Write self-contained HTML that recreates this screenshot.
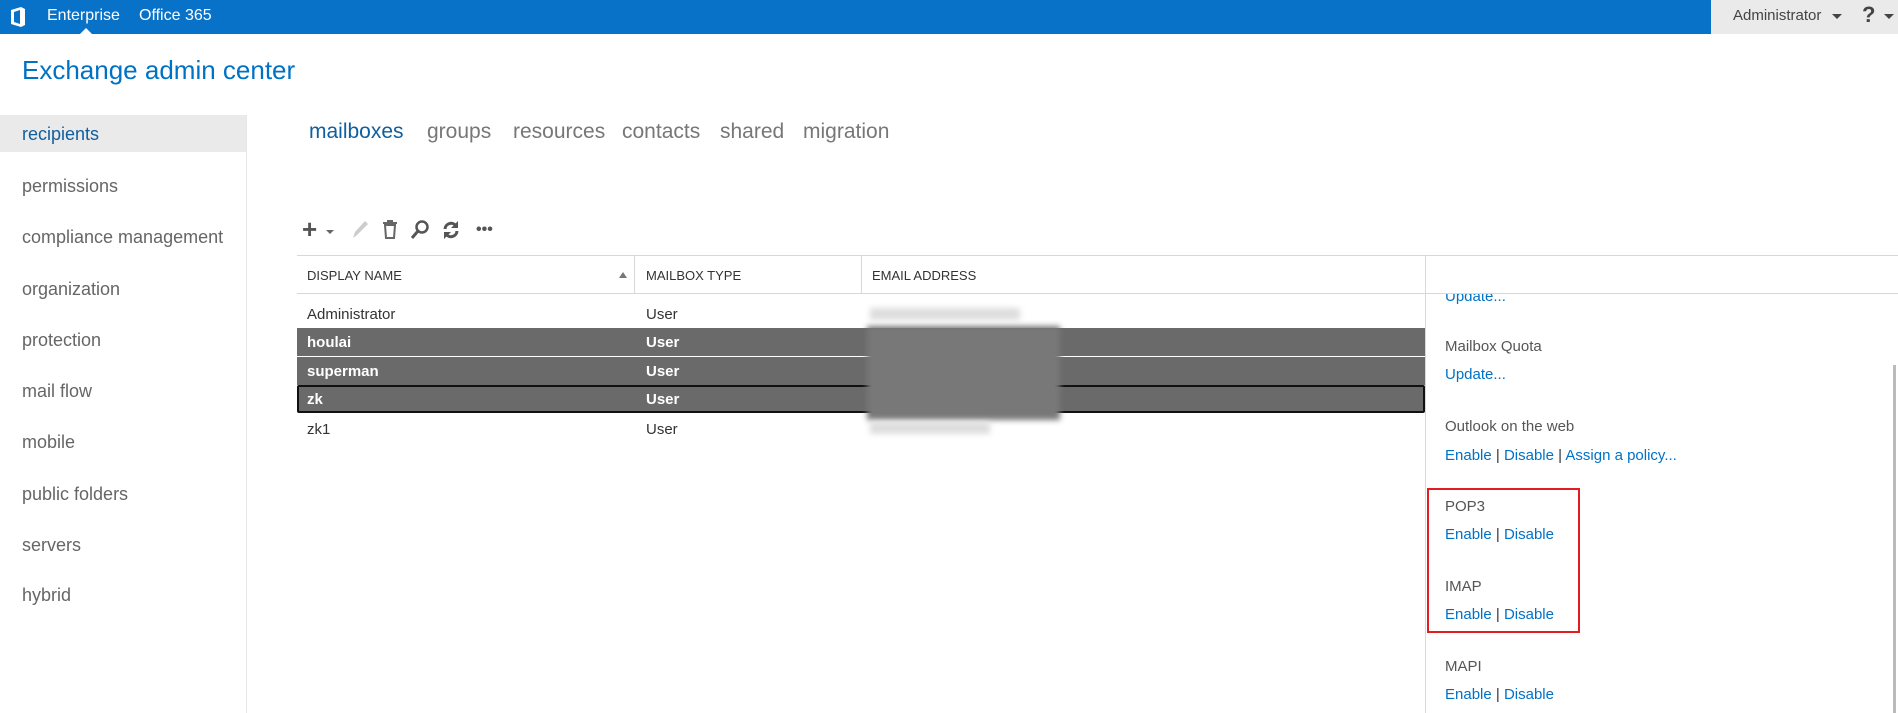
<!DOCTYPE html>
<html><head><meta charset="utf-8"><style>
*{margin:0;padding:0;box-sizing:border-box}
body{width:1898px;height:713px;overflow:hidden;background:#fff;font-family:"Liberation Sans",sans-serif;position:relative;color:#333}
.a{position:absolute;white-space:nowrap}
.top{left:0;top:0;width:1898px;height:34px;background:#0872c9}
.topr{left:1711px;top:0;width:187px;height:34px;background:#eaeaea}
.side{font-size:18px;color:#666;left:22px}
.tab{font-size:21px;color:#777;top:120px}
.hd{font-size:13px;color:#333;top:268px}
.row{font-size:15px;left:297px;width:1128px;height:28px}
.dk{background:#6a6a6a;color:#fff;font-weight:bold}
.c{position:absolute;top:6px}
.pl{font-size:15px;color:#555;left:1445px}
.lk{font-size:15px;color:#0072c6;left:1445px}
.lk span{color:#333}
</style></head><body>
<div class="a top"></div>
<div class="a topr"></div>
<svg class="a" style="left:10px;top:6px" width="16" height="22" viewBox="0 0 16 22"><path d="M1 4 L11 1 L15 3 L15 19 L11 21 L1 18 Z M4 6 L4 16 L10 18 L10 4 Z" fill="#fff" fill-rule="evenodd"/></svg>
<div class="a" style="left:47px;top:7px;font-size:16px;color:#fff">Enterprise</div>
<div class="a" style="left:139px;top:7px;font-size:16px;color:#fff">Office 365</div>
<div class="a" style="left:80px;top:28px;width:0;height:0;border-left:6px solid transparent;border-right:6px solid transparent;border-bottom:6px solid #fff"></div>
<div class="a" style="left:1733px;top:7px;font-size:15px;color:#444">Administrator</div>
<div class="a" style="left:1832px;top:14px;border-left:5px solid transparent;border-right:5px solid transparent;border-top:5px solid #444"></div>
<div class="a" style="left:1862px;top:2px;font-size:22px;font-weight:bold;color:#444">?</div>
<div class="a" style="left:1884px;top:14px;border-left:5px solid transparent;border-right:5px solid transparent;border-top:5px solid #444"></div>

<div class="a" style="left:22px;top:55px;font-size:26px;color:#0072c6">Exchange admin center</div>

<div class="a" style="left:0;top:115px;width:246px;height:37px;background:#eaeaea"></div>
<div class="a" style="left:246px;top:115px;width:1px;height:598px;background:#e6e6e6"></div>
<div class="a side" style="top:124px;color:#0f5e9e">recipients</div>
<div class="a side" style="top:176px">permissions</div>
<div class="a side" style="top:227px">compliance management</div>
<div class="a side" style="top:279px">organization</div>
<div class="a side" style="top:330px">protection</div>
<div class="a side" style="top:381px">mail flow</div>
<div class="a side" style="top:432px">mobile</div>
<div class="a side" style="top:484px">public folders</div>
<div class="a side" style="top:535px">servers</div>
<div class="a side" style="top:585px">hybrid</div>

<div class="a tab" style="left:309px;color:#0f5e9e">mailboxes</div>
<div class="a tab" style="left:427px">groups</div>
<div class="a tab" style="left:513px">resources</div>
<div class="a tab" style="left:622px">contacts</div>
<div class="a tab" style="left:720px">shared</div>
<div class="a tab" style="left:803px">migration</div>

<div class="a" style="left:302px;top:216px;font-size:26px;font-weight:bold;color:#555;line-height:26px">+</div>
<div class="a" style="left:326px;top:230px;border-left:4px solid transparent;border-right:4px solid transparent;border-top:4px solid #666"></div>
<svg class="a" style="left:350px;top:219px" width="20" height="22"><path d="M3 19 L5 13 L15 2 L18 5 L7 16 Z" fill="#ccc"/></svg>
<svg class="a" style="left:382px;top:220px" width="16" height="20"><path d="M1 3h14M6 3V1h4v2M3 5h10l-1 13H4z" fill="none" stroke="#666" stroke-width="2"/></svg>
<svg class="a" style="left:410px;top:219px" width="20" height="22"><circle cx="12" cy="8" r="5.5" fill="none" stroke="#555" stroke-width="2.5"/><path d="M8 12 L2 19" stroke="#555" stroke-width="3"/></svg>
<svg class="a" style="left:441px;top:219px" width="20" height="22"><path d="M4 10a6 6 0 0 1 11-3M16 12a6 6 0 0 1-11 3" fill="none" stroke="#555" stroke-width="3"/><path d="M17 2v7h-7z M3 20v-7h7z" fill="#555"/></svg>
<div class="a" style="left:476px;top:221px;font-size:16px;font-weight:bold;color:#555">•••</div>

<div class="a" style="left:297px;top:255px;width:1601px;height:1px;background:#d8d8d8"></div>
<div class="a" style="left:297px;top:293px;width:1601px;height:1px;background:#d8d8d8"></div>
<div class="a" style="left:634px;top:256px;width:1px;height:37px;background:#d8d8d8"></div>
<div class="a" style="left:861px;top:256px;width:1px;height:37px;background:#d8d8d8"></div>
<div class="a" style="left:1425px;top:256px;width:1px;height:457px;background:#d8d8d8"></div>
<div class="a hd" style="left:307px">DISPLAY NAME</div>
<div class="a" style="left:619px;top:272px;border-left:4px solid transparent;border-right:4px solid transparent;border-bottom:6px solid #777"></div>
<div class="a hd" style="left:646px">MAILBOX TYPE</div>
<div class="a hd" style="left:872px">EMAIL ADDRESS</div>

<div class="a row" style="top:300px"><span class="c" style="left:10px">Administrator</span><span class="c" style="left:349px">User</span></div>
<div class="a row dk" style="top:328px"><span class="c" style="left:10px">houlai</span><span class="c" style="left:349px">User</span></div>
<div class="a row dk" style="top:357px"><span class="c" style="left:10px">superman</span><span class="c" style="left:349px">User</span></div>
<div class="a row dk" style="top:385px;border:2px solid #111;border-radius:2px"><span class="c" style="left:8px;top:4px">zk</span><span class="c" style="left:347px;top:4px">User</span></div>
<div class="a row" style="top:415px"><span class="c" style="left:10px">zk1</span><span class="c" style="left:349px">User</span></div>
<div class="a" style="left:867px;top:326px;width:193px;height:94px;background:#787878;filter:blur(3px)"></div>
<div class="a" style="left:870px;top:308px;width:150px;height:12px;background:#ddd;filter:blur(3px)"></div>
<div class="a" style="left:870px;top:422px;width:120px;height:12px;background:#ddd;filter:blur(3px)"></div>

<div class="a lk" style="top:288px;clip-path:inset(6px 0 0 0)">Update...</div>
<div class="a pl" style="top:338px">Mailbox Quota</div>
<div class="a lk" style="top:366px">Update...</div>
<div class="a pl" style="top:418px">Outlook on the web</div>
<div class="a lk" style="top:447px">Enable <span>|</span> Disable <span>|</span> Assign a policy...</div>
<div class="a" style="left:1427px;top:488px;width:153px;height:145px;border:2px solid #e31b23"></div>
<div class="a pl" style="top:498px">POP3</div>
<div class="a lk" style="top:526px">Enable <span>|</span> Disable</div>
<div class="a pl" style="top:578px">IMAP</div>
<div class="a lk" style="top:606px">Enable <span>|</span> Disable</div>
<div class="a pl" style="top:658px">MAPI</div>
<div class="a lk" style="top:686px">Enable <span>|</span> Disable</div>
<div class="a" style="left:1893px;top:365px;width:3px;height:348px;background:#bbb"></div>
</body></html>
